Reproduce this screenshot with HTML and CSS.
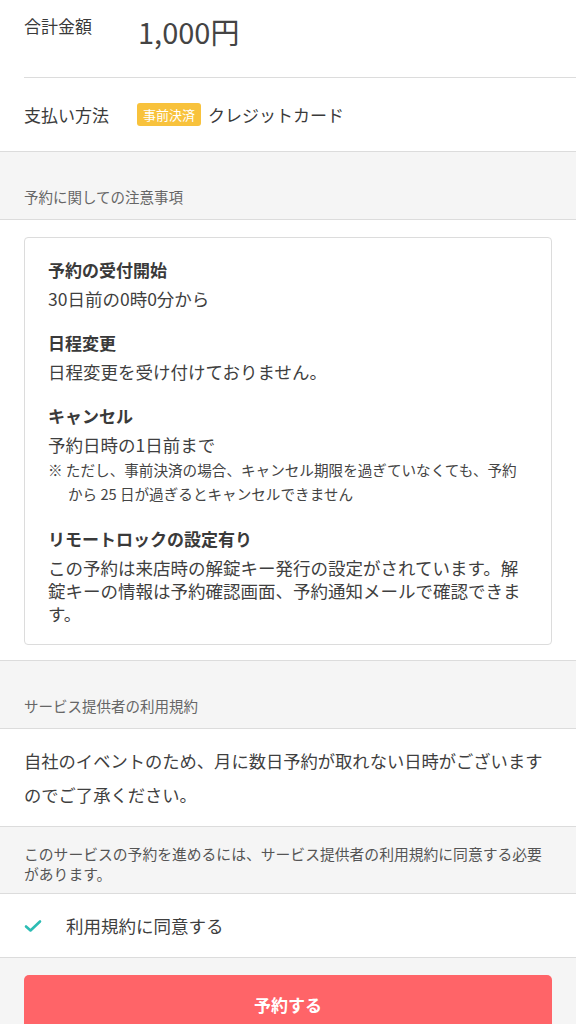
FILE: index.html
```html
<!DOCTYPE html>
<html lang="ja">
<head>
    <meta charset="UTF-8">
    <meta name="viewport" content="width=device-width, initial-scale=1.0">
    <title>予約内容の確認</title>
    <link rel="stylesheet" href="styles.css">
</head>
<body>
    <div class="summary">
        <div class="summary-row total">
            <div class="summary-label">合計金額</div>
            <div class="amount">1,000円</div>
        </div>
        <div class="summary-row payment">
            <div class="summary-label">支払い方法</div>
            <span class="badge">事前決済</span>
            <span class="payment-name">クレジットカード</span>
        </div>
    </div>

    <div class="section-head">予約に関しての注意事項</div>
    <div class="notes-wrap">
        <div class="notes-card">
            <div class="note">
                <div class="note-title">予約の受付開始</div>
                <div class="note-body">30日前の0時0分から</div>
            </div>
            <div class="note">
                <div class="note-title">日程変更</div>
                <div class="note-body">日程変更を受け付けておりません。</div>
            </div>
            <div class="note">
                <div class="note-title">キャンセル</div>
                <div class="note-body">予約日時の1日前まで</div>
                <p class="note-sub">※ ただし、事前決済の場合、キャンセル期限を過ぎていなくても、予約から 25 日が過ぎるとキャンセルできません</p>
            </div>
            <div class="note">
                <div class="note-title">リモートロックの設定有り</div>
                <div class="note-body">この予約は来店時の解錠キー発行の設定がされています。解錠キーの情報は予約確認画面、予約通知メールで確認できます。</div>
            </div>
        </div>
    </div>

    <div class="section-head">サービス提供者の利用規約</div>
    <div class="terms">自社のイベントのため、月に数日予約が取れない日時がございますのでご了承ください。</div>
    <div class="terms-info">このサービスの予約を進めるには、サービス提供者の利用規約に同意する必要があります。</div>
    <label class="agree">
        <svg class="check" width="18" height="14" viewBox="0 0 18 14">
            <path d="M2 7.5 L6.5 11.5 L16 2.5" fill="none" stroke="#2cbcb4" stroke-width="2.6" stroke-linecap="round" stroke-linejoin="round"/>
        </svg>
        <span>利用規約に同意する</span>
    </label>

    <div class="footer">
        <button class="submit">予約する</button>
    </div>
</body>
</html>
```

FILE: styles.css
```css
body {
    margin: 0;
    font-family: "Noto Sans CJK JP", "Noto Sans", sans-serif;
    color: #3a3a3a;
    background-color: #fff;
}
.summary-row {
    display: flex;
    margin-left: 24px;
    padding-right: 24px;
}
.summary-label {
    font-size: 17px;
    width: 114px;
    flex-shrink: 0;
}
.total {
    height: 78px;
    align-items: flex-start;
    padding-top: 12px;
    box-sizing: border-box;
    border-bottom: 1px solid #dcdcdc;
}
.amount {
    font-size: 29px;
    line-height: 40px;
    margin-top: -1px;
    color: #444;
}
.total .summary-label {
    line-height: 28px;
}
.payment {
    height: 73px;
    align-items: center;
}
.payment .summary-label {
    width: 113px;
}
.badge {
    background-color: #f8c23c;
    color: #fff;
    font-size: 13px;
    line-height: 23px;
    padding: 0 6px;
    border-radius: 3px;
    margin-right: 7px;
}
.payment-name {
    font-size: 17px;
}
.section-head {
    background-color: #f5f5f5;
    border-top: 1px solid #dcdcdc;
    border-bottom: 1px solid #dcdcdc;
    height: 69px;
    box-sizing: border-box;
    padding: 35px 24px 0;
    font-size: 14.5px;
    line-height: 20px;
    color: #666;
}
.notes-wrap {
    padding: 17px 24px 15px;
}
.notes-card {
    border: 1px solid #dcdcdc;
    border-radius: 4px;
    padding: 20px 23px 19px;
}
.note + .note {
    margin-top: 21px;
}
.note-title {
    font-size: 17px;
    font-weight: bold;
    line-height: 24px;
    margin-bottom: 5px;
}
.note-body {
    font-size: 17.5px;
    line-height: 23px;
    color: #3f3f3f;
}
.note-sub {
    margin: 2px 0 0;
    font-size: 14.6px;
    line-height: 24px;
    color: #444;
    padding-left: 20px;
    text-indent: -20px;
}
.terms {
    padding: 15px 24px 14px;
    font-size: 17.3px;
    line-height: 34px;
    color: #3f3f3f;
}
.terms-info {
    background-color: #f5f5f5;
    border-top: 1px solid #dcdcdc;
    border-bottom: 1px solid #dcdcdc;
    padding: 17px 24px 9px;
    font-size: 14.8px;
    line-height: 20px;
    color: #555;
}
.agree {
    display: flex;
    align-items: center;
    height: 63px;
    padding: 0 24px;
    font-size: 17.5px;
    color: #3f3f3f;
    border-bottom: 1px solid #dcdcdc;
}
.check {
    margin-right: 24px;
}
.footer {
    background-color: #f5f5f5;
    padding: 17px 24px 24px;
}
.submit {
    display: block;
    width: 100%;
    height: 58px;
    border: none;
    border-radius: 5px;
    background-color: #ff6468;
    color: #fff;
    font-family: inherit;
    font-size: 17px;
    font-weight: bold;
}
```
